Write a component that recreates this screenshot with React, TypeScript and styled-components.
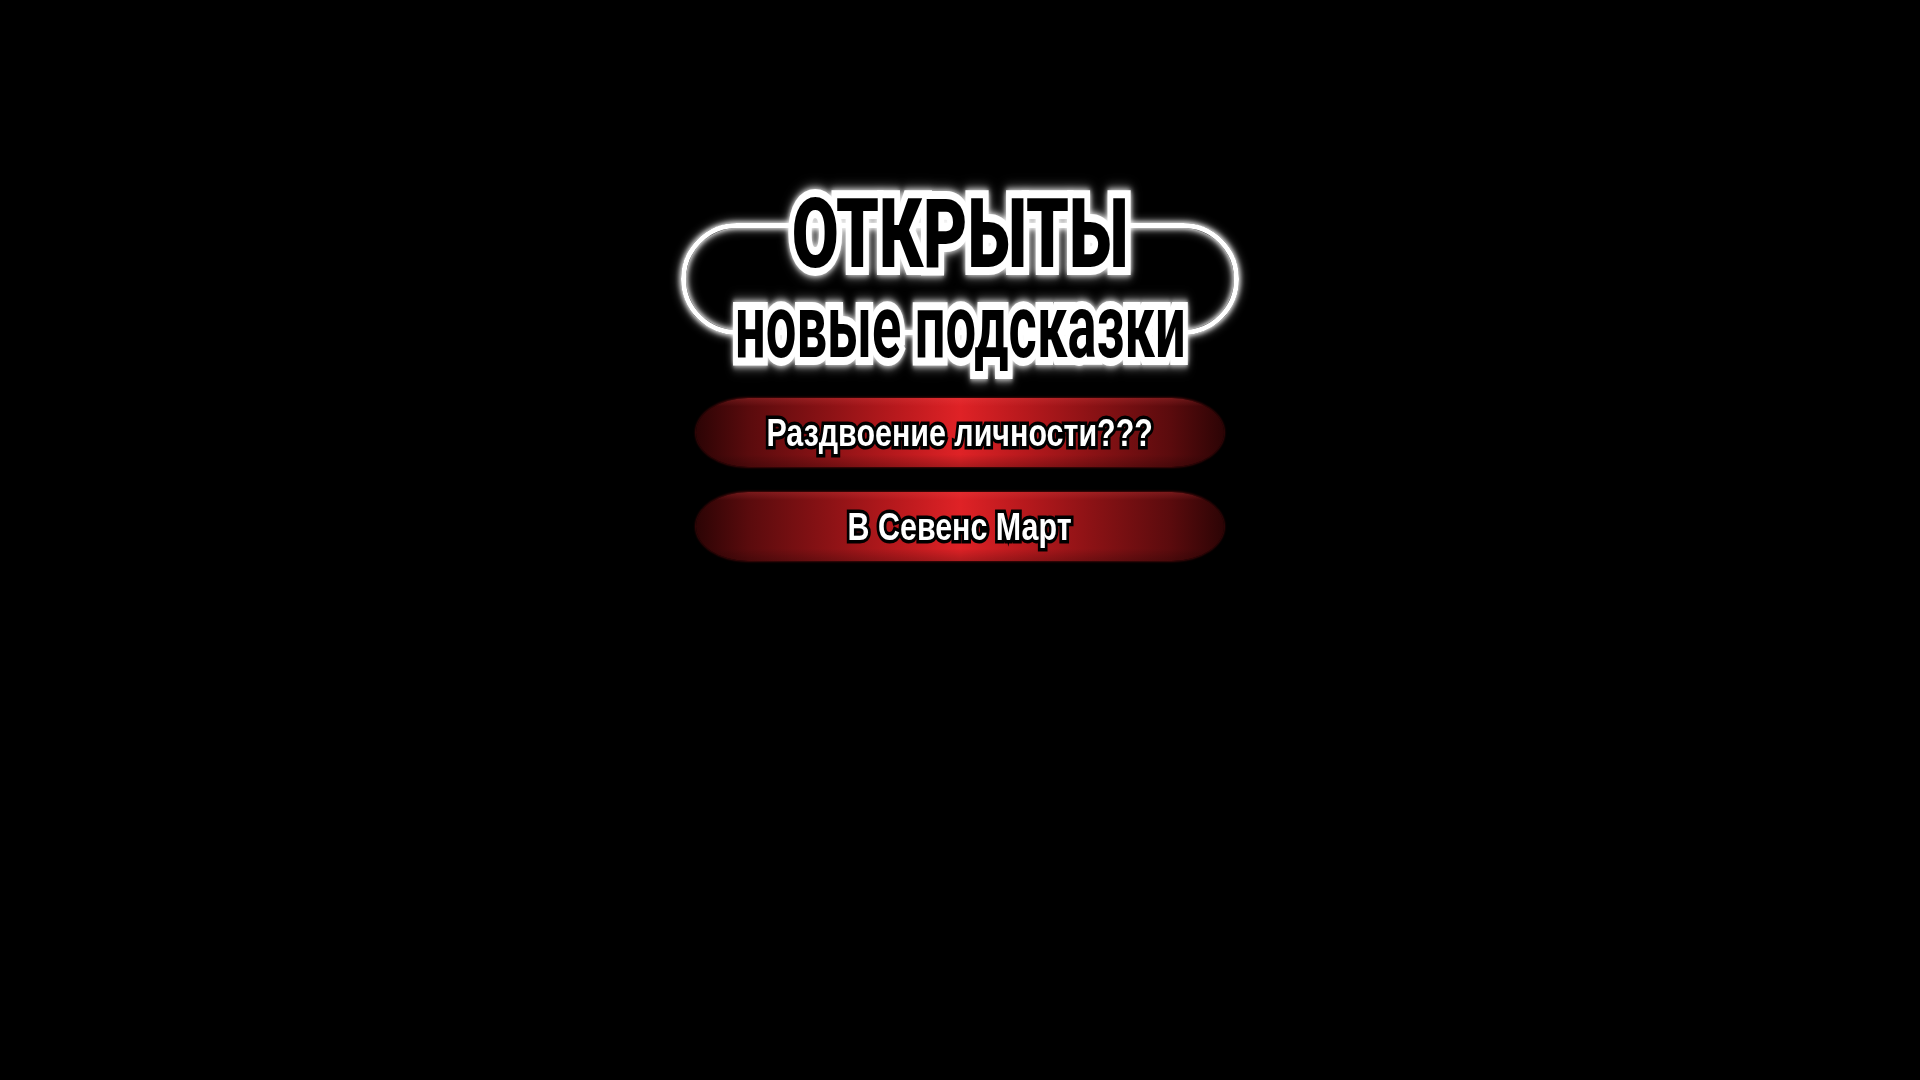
import React from "react";
import styled, { createGlobalStyle } from "styled-components";

const GlobalStyle = createGlobalStyle`
  html, body {
    margin: 0;
    padding: 0;
    background: #000;
  }
  body {
    font-family: "Liberation Sans", Arial, sans-serif;
    color: #fff;
  }
`;

const Page = styled.main`
  min-height: 100vh;
  background: #000;
  display: flex;
  flex-direction: column;
  align-items: center;
  padding-top: 183px;
  box-sizing: border-box;
`;

const Banner = styled.header`
  position: relative;
  width: 558px;
  display: flex;
  flex-direction: column;
  align-items: center;

  &::before {
    content: "";
    position: absolute;
    left: 0;
    right: 0;
    top: 40px;
    height: 112px;
    box-sizing: border-box;
    border: 5px solid #fff;
    border-radius: 56px;
    box-shadow: 0 0 5px 1px rgba(255, 255, 255, 0.9),
      0 0 10px 2px rgba(255, 255, 255, 0.45),
      inset 0 0 5px 1px rgba(255, 255, 255, 0.9),
      inset 0 0 10px 2px rgba(255, 255, 255, 0.45);
  }
`;

const BannerLine = styled.span<{ $size: number; $weight: number; $scale: number; $gap: number }>`
  position: relative;
  display: inline-block;
  margin-top: ${(p) => p.$gap}px;
  font-family: Roboto, "Liberation Sans", sans-serif;
  font-size: ${(p) => p.$size}px;
  font-weight: ${(p) => p.$weight};
  line-height: ${(p) => p.$size}px;
  color: #000;
  white-space: nowrap;
  -webkit-text-stroke: 16px #fff;
  paint-order: stroke fill;
  transform: scaleX(${(p) => p.$scale});
  filter: drop-shadow(0 0 3px rgba(255, 255, 255, 0.9)) drop-shadow(0 0 6px rgba(255, 255, 255, 0.6));
`;

const Choices = styled.nav`
  margin-top: 27px;
  display: flex;
  flex-direction: column;
  gap: 25px;
`;

const Choice = styled.button`
  width: 528px;
  height: 69px;
  border: none;
  padding: 0;
  margin: 0;
  cursor: pointer;
  border-radius: 52px / 50%;
  display: flex;
  align-items: center;
  justify-content: center;
  background:
    linear-gradient(180deg, rgba(255, 90, 90, 0.18) 0%, rgba(255, 90, 90, 0) 12%, rgba(0, 0, 0, 0) 82%, rgba(0, 0, 0, 0.22) 100%),
    linear-gradient(
      90deg,
      #2c0405 0%,
      #5a0b0d 10%,
      #8b1215 25%,
      #b8191d 38%,
      #df2226 50%,
      #b8191d 62%,
      #8b1215 75%,
      #5a0b0d 90%,
      #2c0405 100%
    );
  box-shadow: 0 0 2px 1px rgba(90, 10, 12, 0.7);
`;

const ChoiceLabel = styled.span`
  display: inline-block;
  font-family: "Liberation Sans", Arial, sans-serif;
  font-weight: 700;
  font-size: 39px;
  line-height: 1;
  color: #fff;
  white-space: nowrap;
  -webkit-text-stroke: 7px #000;
  paint-order: stroke fill;
  transform: scaleX(0.78);
`;

export default function App() {
  return (
    <>
      <GlobalStyle />
      <Page>
        <Banner>
          <BannerLine $size={96} $weight={900} $scale={0.71} $gap={3}>
            ОТКРЫТЫ
          </BannerLine>
          <BannerLine $size={89} $weight={700} $scale={0.61} $gap={0}>
            новые подсказки
          </BannerLine>
        </Banner>
        <Choices>
          <Choice>
            <ChoiceLabel>Раздвоение личности???</ChoiceLabel>
          </Choice>
          <Choice>
            <ChoiceLabel>В Севенс Март</ChoiceLabel>
          </Choice>
        </Choices>
      </Page>
    </>
  );
}
